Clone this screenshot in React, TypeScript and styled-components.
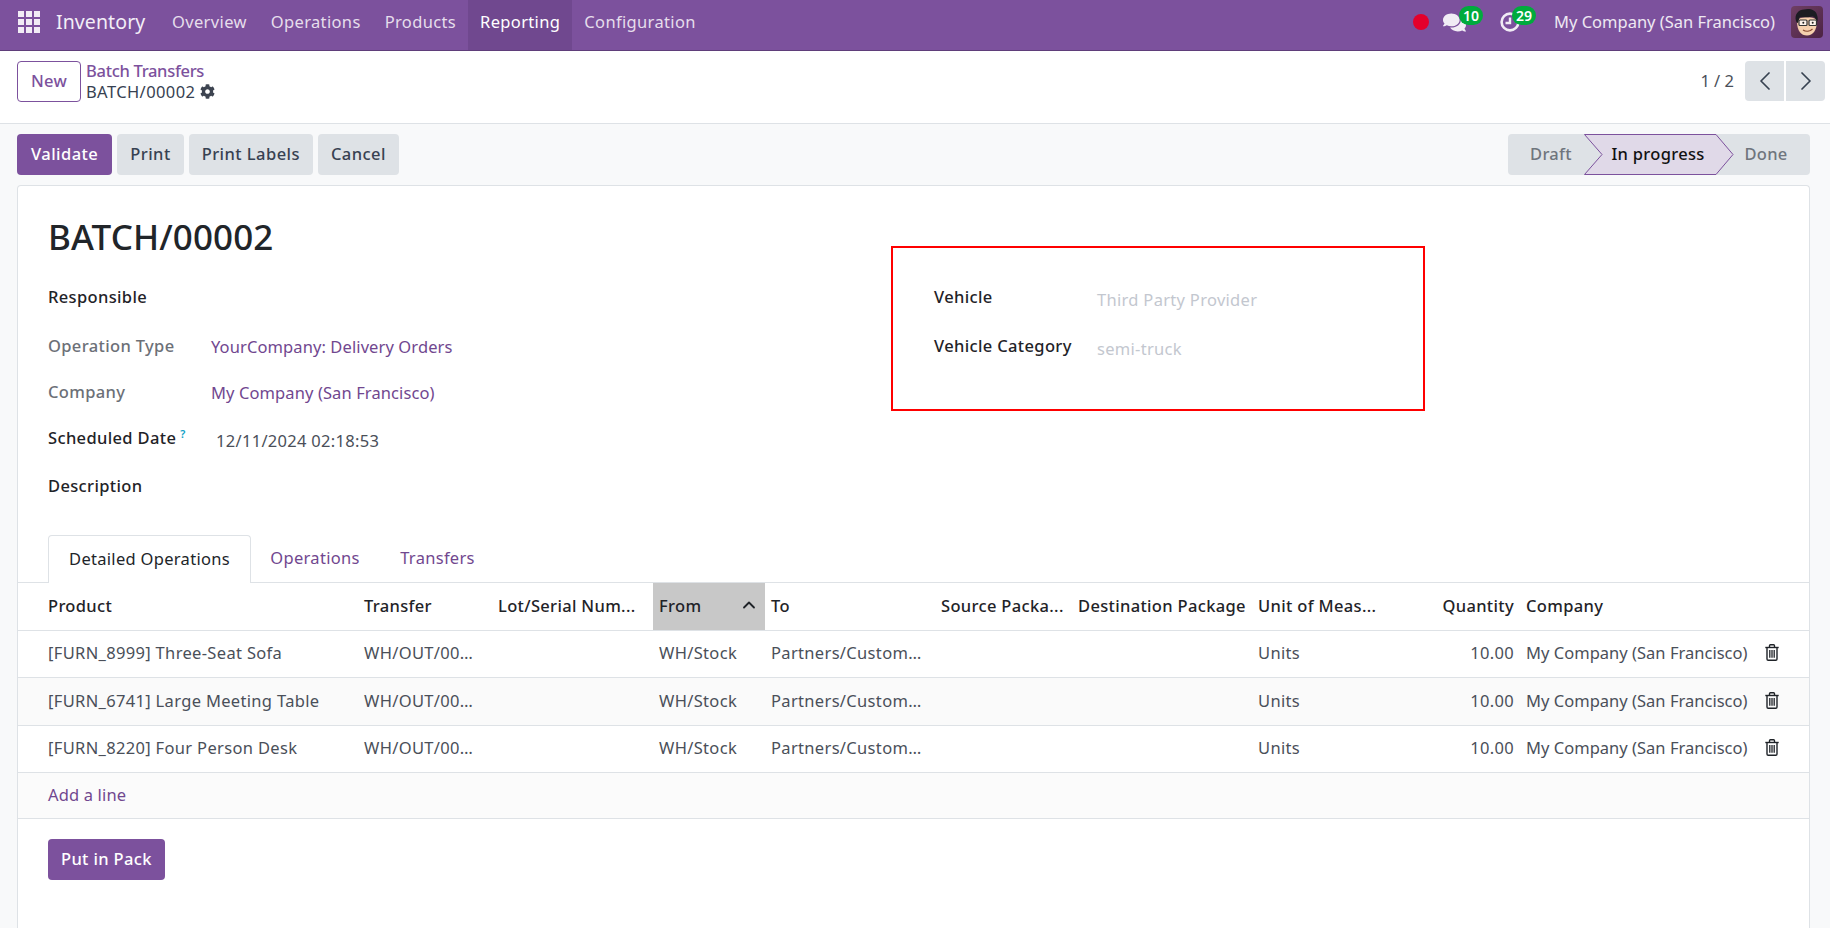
import styled, { createGlobalStyle } from 'styled-components';
import { ChevronLeft, ChevronRight, ChevronUp } from 'lucide-react';
import { FaCog, FaComments } from 'react-icons/fa';

const GlobalStyle = createGlobalStyle`
  html, body {
    margin: 0;
    padding: 0;
    height: 100%;
    background: #f8f9fa;
    overflow: hidden;
  }
  body {
    font-family: "Noto Sans", "Open Sans", sans-serif;
    font-size: 16.5px;
    color: #4a4f59;
  }
`;

const PURPLE = '#7c519d';

const NavBar = styled.header`
  display: flex;
  align-items: stretch;
  height: 50px;
  background: ${PURPLE};
  border-bottom: 1px solid #5f3e7a;
  color: #fff;
`;

const AppsButton = styled.div`
  display: flex;
  align-items: center;
  padding: 0 16px 6px 18px;
`;

const BrandName = styled.div`
  display: flex;
  align-items: center;
  font-size: 19.5px;
  letter-spacing: 0.1px;
  width: 104px;
  padding-bottom: 8px;
  color: #f3eef7;
`;

const NavItem = styled.div<{ $active?: boolean }>`
  display: flex;
  align-items: center;
  padding: 0 12px 8px;
  letter-spacing: 0.35px;
  color: ${(p) => (p.$active ? '#fff' : '#e6deec')};
  background: ${(p) => (p.$active ? '#70488f' : 'transparent')};
`;

const NavRight = styled.div`
  margin-left: auto;
  display: flex;
  align-items: center;
  padding: 0 7px 6px 0;
`;

const RecordDot = styled.div`
  width: 16px;
  height: 16px;
  border-radius: 50%;
  background: #e4002b;
  margin-right: 14px;
`;

const NavIcon = styled.div<{ $gap: number }>`
  position: relative;
  display: flex;
  align-items: center;
  width: 24px;
  height: 24px;
  margin-right: ${(p) => p.$gap}px;
`;

const Badge = styled.span<{ $left: number }>`
  position: absolute;
  top: -4px;
  left: ${(p) => p.$left}px;
  min-width: 24px;
  height: 19px;
  border-radius: 10px;
  background: #00ab3d;
  color: #fff;
  font-size: 14px;
  font-weight: 600;
  line-height: 19px;
  text-align: center;
`;

const CompanyName = styled.div`
  color: #eee8f2;
  margin: 0 16px 2px 0;
`;

const ControlPanel = styled.div`
  display: flex;
  align-items: flex-start;
  height: 62px;
  padding: 10px 5px 0 17px;
  background: #fff;
  border-bottom: 1px solid #dee2e6;
`;

const NewButton = styled.div`
  display: flex;
  align-items: center;
  justify-content: center;
  box-sizing: border-box;
  width: 64px;
  height: 41px;
  padding-bottom: 2px;
  border: 1px solid ${PURPLE};
  border-radius: 4px;
  color: ${PURPLE};
  font-weight: 500;
  letter-spacing: 0.3px;
`;

const Crumbs = styled.div`
  margin: -1px 0 0 5px;
  line-height: 21px;
`;

const CrumbLink = styled.div`
  color: ${PURPLE};
  font-weight: 500;
  letter-spacing: -0.3px;
`;

const CrumbCurrent = styled.div`
  display: flex;
  align-items: center;
  gap: 5px;
  color: #374151;
  letter-spacing: 0.4px;
`;

const Pager = styled.div`
  margin-left: auto;
  display: flex;
  align-items: center;
  gap: 2px;
`;

const PagerText = styled.span`
  margin: 0 9px 2px 0;
  color: #4a4f59;
`;

const PagerButton = styled.div<{ $side: 'left' | 'right' }>`
  display: flex;
  align-items: center;
  justify-content: center;
  width: 39px;
  height: 40px;
  background: #dee2e6;
  color: #374151;
  border-radius: ${(p) => (p.$side === 'left' ? '4px 0 0 4px' : '0 4px 4px 0')};
`;

const ActionBar = styled.div`
  display: flex;
  align-items: center;
  height: 61px;
  padding: 0 20px 0 17px;
  gap: 5px;
`;

const ActionButton = styled.div<{ $primary?: boolean }>`
  display: flex;
  align-items: center;
  height: 41px;
  padding: 0 ${(p) => (p.$primary ? 14 : 13)}px 2px;
  box-sizing: border-box;
  border-radius: 4px;
  font-weight: 500;
  letter-spacing: 0.45px;
  background: ${(p) => (p.$primary ? PURPLE : '#dee2e6')};
  color: ${(p) => (p.$primary ? '#fff' : '#374151')};
`;

const StatusBar = styled.div`
  margin-left: auto;
  display: flex;
  align-items: center;
  height: 41px;
  width: 302px;
  padding-bottom: 2px;
  box-sizing: border-box;
  background: #dee2e6;
  border-radius: 4px;
  position: relative;
  font-weight: 500;
  letter-spacing: 0.3px;
  color: #6f757d;
`;

const StatusLabel = styled.span<{ $width: number; $current?: boolean }>`
  width: ${(p) => p.$width}px;
  text-align: center;
  position: relative;
  color: ${(p) => (p.$current ? '#111' : '#6f757d')};
`;

const StatusArrow = styled.svg`
  position: absolute;
  left: 76px;
  top: 0;
`;

const Sheet = styled.main`
  margin: 0 20px 0 17px;
  height: 743px;
  background: #fff;
  border: 1px solid #dee2e6;
  border-bottom: 0;
  border-radius: 4px 4px 0 0;
`;

const FormTop = styled.div`
  display: flex;
  padding: 0 30px;
  height: 349px;
`;

const LeftGroup = styled.div`
  width: 843px;
  padding-top: 26px;
`;

const Title = styled.h1`
  margin: 0 0 23px;
  font-size: 35px;
  line-height: 50px;
  font-weight: 500;
  letter-spacing: 0.1px;
  color: #212529;
`;

const Field = styled.div<{ $height: number }>`
  display: flex;
  align-items: flex-start;
  height: ${(p) => p.$height}px;
`;

const Label = styled.label<{ $muted?: boolean }>`
  width: 163px;
  font-weight: 500;
  line-height: 24px;
  flex-shrink: 0;
  letter-spacing: 0.35px;
  color: ${(p) => (p.$muted ? '#6c7077' : '#1f2328')};
`;

const Help = styled.sup`
  color: #0f9fc6;
  font-size: 11px;
  font-weight: 600;
  line-height: 0;
  margin-left: 4px;
`;

const ValueLink = styled.span`
  color: #71478f;
  line-height: 24px;
  margin-top: 1px;
  letter-spacing: 0.1px;
`;

const ValueText = styled.span`
  color: #4a4f59;
  line-height: 24px;
  margin: 3px 0 0 5px;
  letter-spacing: 0.3px;
`;

const Placeholder = styled.span`
  color: #c3c7cf;
  line-height: 24px;
  margin-top: 3px;
  letter-spacing: 0.3px;
`;

const RedFrame = styled.section`
  box-sizing: border-box;
  width: 534px;
  height: 165px;
  margin-top: 60px;
  padding: 37px 40px 0 41px;
  border: 2px solid #ff0000;
`;

const TabBar = styled.nav`
  display: flex;
  height: 47px;
  padding-left: 30px;
  border-bottom: 1px solid #dee2e6;
`;

const Tab = styled.div<{ $active?: boolean; $width: number }>`
  display: flex;
  align-items: center;
  justify-content: center;
  box-sizing: border-box;
  width: ${(p) => p.$width}px;
  height: ${(p) => (p.$active ? 48 : 46)}px;
  padding-bottom: 2px;
  letter-spacing: 0.3px;
  color: ${(p) => (p.$active ? '#212529' : '#71478f')};
  background: ${(p) => (p.$active ? '#fff' : 'transparent')};
  border: 1px solid ${(p) => (p.$active ? '#dee2e6' : 'transparent')};
  border-bottom: 0;
  border-radius: 4px 4px 0 0;
`;

const COLUMNS = '340px 134px 161px 112px 170px 137px 180px 135px 133px 235px 1fr';

const Row = styled.div<{ $shaded?: boolean; $head?: boolean }>`
  display: grid;
  grid-template-columns: ${COLUMNS};
  align-items: stretch;
  height: 47.5px;
  box-sizing: border-box;
  border-bottom: 1px solid #dee2e6;
  letter-spacing: 0.33px;
  background: ${(p) => (p.$shaded ? '#fafafa' : '#fff')};
  font-weight: ${(p) => (p.$head ? 500 : 400)};
  color: ${(p) => (p.$head ? '#1f2328' : '#4a4f59')};
`;

const Cell = styled.div<{ $first?: boolean; $right?: boolean; $sorted?: boolean }>`
  display: flex;
  align-items: center;
  justify-content: ${(p) => (p.$sorted ? 'space-between' : p.$right ? 'flex-end' : 'flex-start')};
  padding: 0 6px 2px ${(p) => (p.$first ? 30 : 6)}px;
  min-width: 0;
  white-space: nowrap;
  background: ${(p) => (p.$sorted ? '#c8c8c8' : 'transparent')};
`;

const PlainText = styled.span`
  letter-spacing: 0.02px;
`;

const TrashCell = styled.div`
  display: flex;
  align-items: center;
  padding: 0 0 2px 10px;
`;

const AddRow = styled.div`
  display: flex;
  align-items: center;
  height: 46px;
  box-sizing: border-box;
  padding: 0 0 2px 30px;
  background: #fbfbfb;
  border-bottom: 1px solid #dee2e6;
  color: #71478f;
  letter-spacing: 0.15px;
`;

const Footer = styled.div`
  padding: 20px 30px;
`;

const PackButton = styled.div`
  display: inline-flex;
  align-items: center;
  box-sizing: border-box;
  height: 41px;
  padding: 0 13px 2px;
  border-radius: 4px;
  background: ${PURPLE};
  color: #fff;
  font-weight: 500;
  letter-spacing: 0.35px;
`;

const AppsIcon = () => (
  <svg width="22" height="22" viewBox="0 0 22 22" fill="#f1ecf5">
    {[0, 8, 16].flatMap((y) =>
      [0, 8, 16].map((x) => <rect key={`${x}-${y}`} x={x} y={y} width="6" height="6" />),
    )}
  </svg>
);

const ClockIcon = () => (
  <svg width="20" height="20" viewBox="0 0 20 20" fill="none" stroke="#f1ecf5" strokeWidth="2.6">
    <circle cx="10" cy="10" r="8.4" />
    <path d="M10 5.5V11H5.5" strokeWidth="2.4" />
  </svg>
);

const TrashIcon = () => (
  <svg width="14" height="17" viewBox="0 0 14 17" fill="none" stroke="#1f2328" strokeWidth="1.4">
    <path d="M0.3 3.5H13.7" />
    <path d="M4.5 3.3V1.7C4.5 1.1 5 .8 5.4 .8H8.6C9 .8 9.5 1.1 9.5 1.7V3.3" />
    <path d="M2 3.5V15C2 15.8 2.5 16.2 3.2 16.2H10.8C11.5 16.2 12 15.8 12 15V3.5" />
    <path d="M4.8 6V13.8M7 6V13.8M9.2 6V13.8" strokeWidth="1.3" />
  </svg>
);

const Avatar = () => (
  <svg width="32" height="32" viewBox="0 0 32 32">
    <defs>
      <linearGradient id="avatarBg" x1="0" y1="0" x2="1" y2="1">
        <stop offset="0" stopColor="#6f3f63" />
        <stop offset="1" stopColor="#4c2344" />
      </linearGradient>
    </defs>
    <rect width="32" height="32" rx="4" fill="url(#avatarBg)" />
    <path d="M6 15C6 25 10 29.5 16 29.5C22 29.5 26 24 26 15C26 10 6 10 6 15Z" fill="#f6d0ae" />
    <path d="M5 15C3 8 8 3.5 13 3.5C17 2 25 3 26 9C27 12 27 14 26 16C25 13 24 11.5 22 10.5C17 11.5 11 11.5 9 11C8 12.5 8 14 7 17C6 17 5.5 16 5 15Z" fill="#1c1c22" />
    <rect x="8" y="14" width="8" height="5.5" rx="1" fill="#fff" fillOpacity=".75" stroke="#333" strokeWidth="1.2" />
    <rect x="18" y="14" width="7.5" height="5.5" rx="1" fill="#fff" fillOpacity=".75" stroke="#333" strokeWidth="1.2" />
    <circle cx="12.3" cy="16.7" r="1" fill="#222" />
    <circle cx="21.7" cy="16.7" r="1" fill="#222" />
    <path d="M12 24C15 26 19 25.5 21.5 23" fill="none" stroke="#8a4b32" strokeWidth="1.2" />
  </svg>
);

const NAV_ITEMS = ['Overview', 'Operations', 'Products', 'Reporting', 'Configuration'];

const MOVES = [
  '[FURN_8999] Three-Seat Sofa',
  '[FURN_6741] Large Meeting Table',
  '[FURN_8220] Four Person Desk',
];

const App = () => (
  <>
    <GlobalStyle />
    <NavBar>
      <AppsButton>
        <AppsIcon />
      </AppsButton>
      <BrandName>Inventory</BrandName>
      {NAV_ITEMS.map((item) => (
        <NavItem key={item} $active={item === 'Reporting'}>
          {item}
        </NavItem>
      ))}
      <NavRight>
        <RecordDot />
        <NavIcon $gap={33}>
          <FaComments size={23} color="#f1ecf5" />
          <Badge $left={16}>10</Badge>
        </NavIcon>
        <NavIcon $gap={30}>
          <ClockIcon />
          <Badge $left={12}>29</Badge>
        </NavIcon>
        <CompanyName>My Company (San Francisco)</CompanyName>
        <Avatar />
      </NavRight>
    </NavBar>

    <ControlPanel>
      <NewButton>New</NewButton>
      <Crumbs>
        <CrumbLink>Batch Transfers</CrumbLink>
        <CrumbCurrent>
          BATCH/00002 <FaCog size={15} color="#3d4450" />
        </CrumbCurrent>
      </Crumbs>
      <Pager>
        <PagerText>1 / 2</PagerText>
        <PagerButton $side="left">
          <ChevronLeft size={32} strokeWidth={1.3} />
        </PagerButton>
        <PagerButton $side="right">
          <ChevronRight size={32} strokeWidth={1.3} />
        </PagerButton>
      </Pager>
    </ControlPanel>

    <ActionBar>
      <ActionButton $primary>Validate</ActionButton>
      <ActionButton>Print</ActionButton>
      <ActionButton>Print Labels</ActionButton>
      <ActionButton>Cancel</ActionButton>
      <StatusBar>
        <StatusArrow width="176" height="41" viewBox="0 0 176 41">
          <path d="M0.5 0.5H132L149 20.5L132 40.5H0.5L18 20.5Z" fill="#e0d9e8" stroke={PURPLE} />
        </StatusArrow>
        <StatusLabel $width={86}>Draft</StatusLabel>
        <StatusLabel $width={128} $current>
          In progress
        </StatusLabel>
        <StatusLabel $width={88}>Done</StatusLabel>
      </StatusBar>
    </ActionBar>

    <Sheet>
      <FormTop>
        <LeftGroup>
          <Title>BATCH/00002</Title>
          <Field $height={49}>
            <Label>Responsible</Label>
          </Field>
          <Field $height={46}>
            <Label $muted>Operation Type</Label>
            <ValueLink>YourCompany: Delivery Orders</ValueLink>
          </Field>
          <Field $height={46}>
            <Label $muted>Company</Label>
            <ValueLink>My Company (San Francisco)</ValueLink>
          </Field>
          <Field $height={48}>
            <Label>
              Scheduled Date<Help>?</Help>
            </Label>
            <ValueText>12/11/2024 02:18:53</ValueText>
          </Field>
          <Field $height={40}>
            <Label>Description</Label>
          </Field>
        </LeftGroup>
        <RedFrame>
          <Field $height={49}>
            <Label>Vehicle</Label>
            <Placeholder>Third Party Provider</Placeholder>
          </Field>
          <Field $height={46}>
            <Label>Vehicle Category</Label>
            <Placeholder>semi-truck</Placeholder>
          </Field>
        </RedFrame>
      </FormTop>

      <TabBar>
        <Tab $active $width={203}>Detailed Operations</Tab>
        <Tab $width={128}>Operations</Tab>
        <Tab $width={117}>Transfers</Tab>
      </TabBar>

      <Row $head>
        <Cell $first>Product</Cell>
        <Cell>Transfer</Cell>
        <Cell>Lot/Serial Num...</Cell>
        <Cell $sorted>
          From
          <ChevronUp size={20} strokeWidth={2.2} />
        </Cell>
        <Cell>To</Cell>
        <Cell>Source Packa...</Cell>
        <Cell>Destination Package</Cell>
        <Cell>Unit of Meas...</Cell>
        <Cell $right>Quantity</Cell>
        <Cell>Company</Cell>
        <Cell />
      </Row>
      {MOVES.map((product, index) => (
        <Row key={product} $shaded={index === 1}>
          <Cell $first>{product}</Cell>
          <Cell>WH/OUT/00…</Cell>
          <Cell />
          <Cell>WH/Stock</Cell>
          <Cell>Partners/Custom…</Cell>
          <Cell />
          <Cell />
          <Cell>Units</Cell>
          <Cell $right>10.00</Cell>
          <Cell>
            <PlainText>My Company (San Francisco)</PlainText>
          </Cell>
          <TrashCell>
            <TrashIcon />
          </TrashCell>
        </Row>
      ))}
      <AddRow>Add a line</AddRow>
      <Footer>
        <PackButton>Put in Pack</PackButton>
      </Footer>
    </Sheet>
  </>
);

export default App;
